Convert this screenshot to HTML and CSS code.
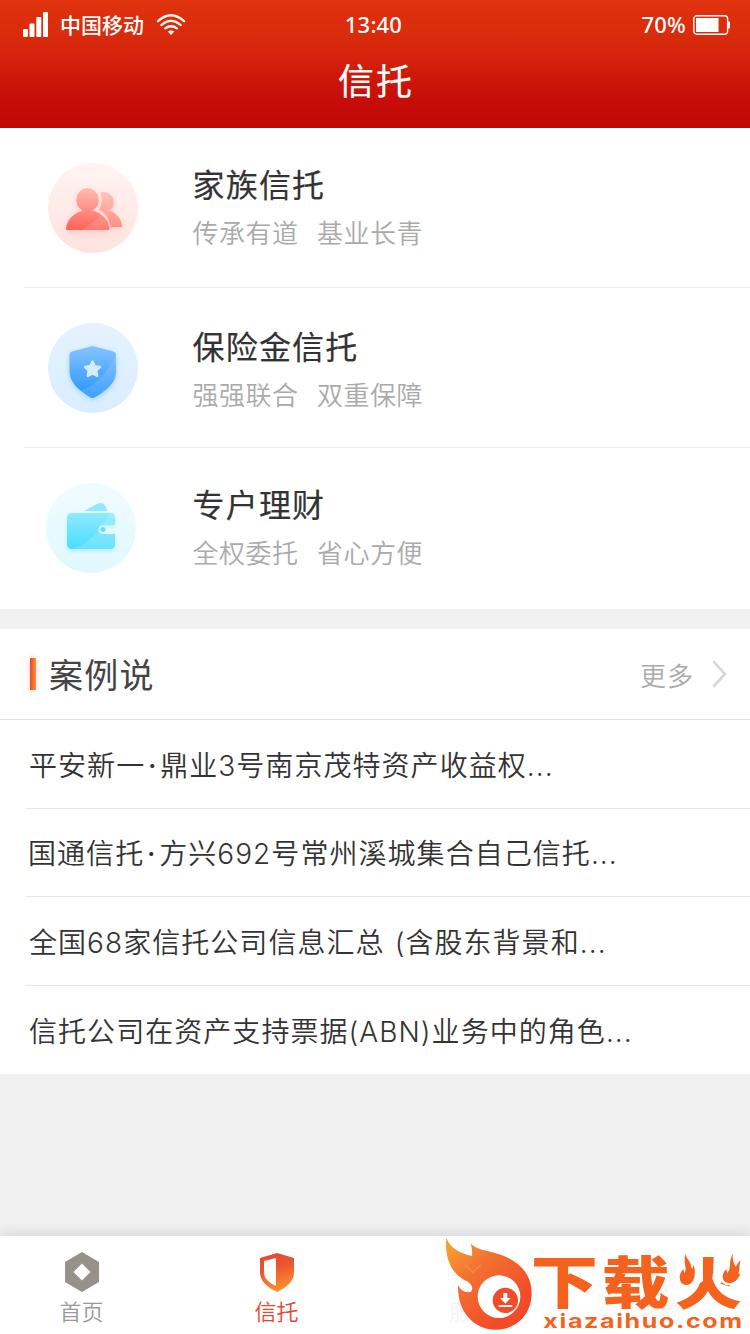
FILE: index.html
```html
<!DOCTYPE html>
<html lang="zh-CN">
<head>
<meta charset="utf-8">
<title>信托</title>
<link rel="stylesheet" href="styles.css">
</head>
<body>
<div class="app">
  <header class="header">
    <div class="status">
      <div class="status-left">
        <svg class="signal" viewBox="0 0 25 25" width="25" height="25" fill="#fff"><rect x="0" y="17" width="5" height="8" rx="1"/><rect x="6.5" y="11.5" width="5" height="13.5" rx="1"/><rect x="13.3" y="5" width="5" height="20" rx="1"/><rect x="20" y="0" width="5" height="25" rx="1"/></svg>
        <span class="carrier">中国移动</span>
        <svg class="wifi" viewBox="0 0 30 22" width="30" height="22" fill="none" stroke="#fff" stroke-width="2.3" stroke-linecap="round"><path d="M2 7.2Q15-4.6 28 7.2M5.4 11Q15 2.7 24.6 11M9.2 14.4Q15 10 20.8 14.4"/><path d="M15 21l-3.3-3.4q3.3-2.4 6.6 0z" fill="#fff" stroke="none"/></svg>
      </div>
      <div class="clock">13:40</div>
      <div class="status-right">
        <span>70%</span>
        <svg viewBox="0 0 37 20" width="37" height="20"><rect x=".8" y=".8" width="33.8" height="18.4" rx="3" fill="none" stroke="#fff" stroke-width="1.4"/><rect x="3" y="3" width="22.5" height="14" fill="#fff"/><path d="M35 6.5h1q1 0 1 1v5q0 1-1 1h-1z" fill="#fff"/></svg>
      </div>
    </div>
    <h1 class="title">信托</h1>
  </header>

  <section class="products">
    <div class="product">
      <svg class="product-icon" viewBox="0 0 90 90" width="90" height="90">
        <defs>
          <linearGradient id="redBg" x2="0" y2="1"><stop stop-color="#fff4f2"/><stop offset="1" stop-color="#ffe2de"/></linearGradient>
          <linearGradient id="redFg" x2="0" y2="1"><stop stop-color="#ffbcb5"/><stop offset="1" stop-color="#ff6357"/></linearGradient>
          <linearGradient id="redBack" x2="0" y2="1"><stop stop-color="#ffc4bd"/><stop offset="1" stop-color="#ff8e83"/></linearGradient>
          <filter id="soft" x="-30%" y="-30%" width="160%" height="170%"><feDropShadow dx="0" dy="3" stdDeviation="3" flood-color="#ff6357" flood-opacity=".2"/></filter>
          <clipPath id="peopleClip"><path d="M39 25a12 12 0 0 1 5 23c10 3 17 10 17 19H18c0-9 7-16 17-19a12 12 0 0 1 4-23z"/></clipPath>
        </defs>
        <circle cx="45" cy="45" r="45" fill="url(#redBg)"/>
        <g filter="url(#soft)">
          <path d="M52 29.5c7-2 14 3 14 9.500 0 4-2 7-5 8.500 7 2 13 8.500 13 16.500H62.500C61 56 58 50 51 47c3-5 4-12 1-17.500z" fill="url(#redBack)"/>
          <path d="M39.500 25a12 12 0 0 1 5 22.500c10 3 16.800 10 16.800 19.500H18c0-9.500 7-16.500 16.500-19.500a12 12 0 0 1 5-22.500z" fill="url(#redFg)"/>
        </g>
        <path d="M34 67Q52 56 65 37V70H34z" fill="#fff" opacity=".15" clip-path="url(#peopleClip)"/>
      </svg>
      <div class="product-text"><h2>家族信托</h2><p><span>传承有道</span><span>基业长青</span></p></div>
    </div>
    <div class="product second">
      <svg class="product-icon" viewBox="0 0 90 90" width="90" height="90">
        <defs>
          <linearGradient id="blueBg" x2="0" y2="1"><stop stop-color="#e5f2fe"/><stop offset="1" stop-color="#d9edff"/></linearGradient>
          <linearGradient id="blueFg" x2="0" y2="1"><stop stop-color="#85c3ff"/><stop offset="1" stop-color="#2494ff"/></linearGradient>
          <filter id="blueSoft" x="-30%" y="-30%" width="160%" height="170%"><feDropShadow dx="0" dy="2" stdDeviation="2.500" flood-color="#1685ed" flood-opacity=".25"/></filter>
        </defs>
        <circle cx="45" cy="45" r="45" fill="url(#blueBg)"/>
        <path d="M42.500 23.500q2-1 4 0l19 5q2.500 1 2.500 3v17c0 12-11 20-21.500 26q-2 1-4 0C32 68 21.500 60 21.500 48.500v-17q0-2 2.500-3z" fill="url(#blueFg)" filter="url(#blueSoft)"/>
        <path d="M68 32v16.500C68 60 57 68.500 46.500 74.500q-2 1-4 0l-10-7Q54 61 68 32z" fill="#fff" opacity=".12"/>
        <path d="M44.500 38.500l2.300 4.700 5.200.8-3.800 3.700 1 5.200-4.700-2.500-4.700 2.500 1-5.200-3.800-3.700 5.200-.8z" fill="#d9ecff" stroke="#d9ecff" stroke-width="2.400" stroke-linejoin="round"/>
      </svg>
      <div class="product-text"><h2>保险金信托</h2><p><span>强强联合</span><span>双重保障</span></p></div>
    </div>
    <div class="product third">
      <svg class="product-icon" viewBox="0 0 90 90" width="90" height="90">
        <defs>
          <linearGradient id="cyanBg" x2="0" y2="1"><stop stop-color="#f1fcff"/><stop offset="1" stop-color="#e0f8ff"/></linearGradient>
          <linearGradient id="cyanFg" x2="0" y2="1"><stop stop-color="#8feaff"/><stop offset="1" stop-color="#4bdcff"/></linearGradient>
          <filter id="cyanSoft" x="-30%" y="-30%" width="160%" height="170%"><feDropShadow dx="0" dy="2" stdDeviation="2" flood-color="#28cdf5" flood-opacity=".25"/></filter>
        </defs>
        <circle cx="45" cy="45" r="45" fill="url(#cyanBg)"/>
        <path d="M38 28l14-7.500q5-2 7.500 2.500l2 5z" fill="#91e9fd"/>
        <path d="M26 30h38q5 0 5 5v7H57a4.500 4.500 0 0 0 0 9h12v10q0 5-5 5H26q-5 0-5-5V35q0-5 5-5z" fill="url(#cyanFg)" filter="url(#cyanSoft)"/>
        <path d="M64 30q5 0 5 5v7H57a4.500 4.500 0 0 0 0 9h12v10q0 5-5 5H26Q52 57 64 30z" fill="#fff" opacity=".16"/>
        <circle cx="57" cy="46.500" r="2.500" fill="#65dff9"/>
      </svg>
      <div class="product-text"><h2>专户理财</h2><p><span>全权委托</span><span>省心方便</span></p></div>
    </div>
  </section>

  <section class="cases">
    <div class="cases-head">
      <i class="mark"></i>
      <h2>案例说</h2>
      <span class="more">更多</span>
      <svg class="chevron" viewBox="0 0 15 28" width="15" height="28" fill="none" stroke="#d8d8d8" stroke-width="2.600" stroke-linecap="round"><path d="M2 2l11 12L2 26"/></svg>
    </div>
    <ul class="list">
      <li><span>平安新一</span><b>·</b><span>鼎业3号南京茂特资产收益权...</span></li>
      <li class="pull"><span>国通信托</span><b>·</b><span>方兴692号常州溪城集合自己信托...</span></li>
      <li><span>全国68家信托公司信息汇总</span><span class="open">(含股东背景和...</span></li>
      <li><span>信托公司在资产支持票据(ABN)业务中的角色...</span></li>
    </ul>
  </section>

  <nav class="tabs">
    <div class="tab home">
      <svg viewBox="0 0 34 40" width="34" height="40"><path d="M17 0l17 10v20L17 40 0 30V10z" fill="#96918b"/><path d="M17 11.500l8.500 8.500-8.500 8.500L8.500 20z" fill="#fff"/></svg>
      <span>首页</span>
    </div>
    <div class="tab active">
      <svg viewBox="0 0 34 40" width="34" height="40"><defs><linearGradient id="tabFg" x1=".4" x2=".65" y2="1"><stop stop-color="#e6482f"/><stop offset=".35" stop-color="#eb552e"/><stop offset="1" stop-color="#ff962d"/></linearGradient></defs><path d="M17 1l17 5v15c0 8-8 15-17 19C8 36 0 29 0 21V6z" fill="url(#tabFg)"/><path d="M16 6v28C9 31 4 26 4 21V9z" fill="#fff"/></svg>
      <span>信托</span>
    </div>
    <div class="tab ghost"><svg viewBox="0 0 34 40" width="34" height="40"></svg><span>服务</span></div>
    <div class="tab ghost"><svg viewBox="0 0 34 40" width="34" height="40"><circle cx="17" cy="20" r="17" fill="#fafafa"/></svg><span>我的</span></div>
    <svg class="brand" viewBox="0 0 960 342" width="320" height="114">
      <defs>
        <linearGradient id="flame" x1=".05" y1="0" x2=".75" y2=".8"><stop stop-color="#f9a42f"/><stop offset=".4" stop-color="#f37332"/><stop offset="1" stop-color="#f34a28"/></linearGradient>
      </defs>
      <path d="M49 54C62 87 91 100 126 108Q128 91 122 70C139 90 169 91 202 101C264 119 305 160 305 220C305 284 259 329 198 329C132 329 81 276 84 194C91 211 107 220 123 215C133 202 121 187 103 180C61 158 43 105 49 54Z" fill="url(#flame)"/>
      <circle cx="207" cy="230" r="64" fill="#fff"/>
      <circle cx="226" cy="241" r="38" fill="#f14b29"/>
      <path d="M220 219h12v15h10l-16 17-16-17h10zM206 255h41v6h-41z" fill="#fff"/>
      <path d="M105 135l23 22 24-22" fill="none" stroke="#f7a15c" stroke-width="4" opacity=".55"/>
      <g class="brand-name"><text transform="translate(302 249) scale(1.060 .9)">下</text><text transform="translate(515 250) scale(1.070 .87)">载</text><text transform="translate(734 252) scale(1.060 .88)">火</text></g>
      <g fill="#fff"><path d="M738 95h81v88l-24 16h-57zM864 95h85v101h-60l-25-16z"/></g>
      <g fill="#f4621d"><path d="M766 101c2 14 18 25 17 38l4 8 3-13c10 21 4 61-21 61-24 0-25-33-9-48l3 13c10-18-4-29 3-59z"/><path d="M909 101c-4 20 4 30 8 39 7-7 6-15 14-18-5 15 1 27-7 38l7 2c-8 20-21 28-35 27-25-3-21-33-6-41l1 11c16-13 2-35 18-58z"/></g>
      <text class="brand-url" transform="translate(340 323) scale(1.250 1)" textLength="477" lengthAdjust="spacing">xiazaihuo.com</text>
    </svg>
  </nav>
</div>
</body>
</html>
```

FILE: styles.css
```css
* { box-sizing: border-box; }
body { margin: 0; font-family: "Noto Sans CJK SC", sans-serif; }
h1, h2, p, ul { margin: 0; padding: 0; font-weight: 400; }
svg { display: block; flex: none; }
.app { width: 750px; height: 1334px; display: flex; flex-direction: column; background: #f0f0f0; overflow: hidden; }

.header { height: 128px; background: linear-gradient(#e0330e, #d8280c 35%, #c70d08 78%, #c10606); color: #fff; }
.status { height: 49px; display: grid; grid-template-columns: 1fr auto 1fr; align-items: center; padding: 0 20px 0 23px; font: 500 22px/49px "Noto Sans", "Noto Sans CJK SC", sans-serif; letter-spacing: .2px; }
.status-left, .status-right { display: flex; align-items: center; }
.status-left { gap: 12px; }
.clock { margin-left: -6px; }
.carrier { font-size: 21px; letter-spacing: 0; font-family: "Noto Sans CJK SC", sans-serif; line-height: 47px; }
.status-right { justify-content: flex-end; gap: 7px; }
.title { font-size: 36px; line-height: 60px; letter-spacing: 2px; text-align: center; padding-left: 2px; -webkit-text-stroke: .2px #fff; }

.products { height: 481px; background: #fff; }
.product { height: 160px; margin-left: 24px; padding: 35px 0 0 24px; display: flex; gap: 54.500px; border-bottom: 1px solid #ececec; }
.product.third { padding-left: 22px; gap: 56.500px; border: 0; }
.product h2 { font-size: 32px; line-height: 40px; letter-spacing: 1.200px; color: #333; -webkit-text-stroke: .2px #333; }
.product p { display: flex; gap: 18.500px; margin-top: 9px; font-size: 26px; line-height: 40px; letter-spacing: .5px; color: #aaa; font-weight: 350; }
.second .product-text { margin-top: 2px; }

.cases { height: 445px; margin-top: 20px; background: #fff; }
.cases-head { height: 91px; display: flex; align-items: center; padding: 0 23px 0 30px; border-bottom: 1px solid #dfdfdf; }
.mark { width: 6px; height: 32px; background: linear-gradient(90deg, #ea4430, #ff962d); box-shadow: 0 0 6px rgba(234, 68, 48, .25); }
.cases-head h2 { margin: -2px 0 0 13px; font-size: 34px; letter-spacing: 1.2px; color: #444; }
.more { margin: 0 0 0 auto; font-size: 26px; letter-spacing: 1px; color: #aaa; font-weight: 350; }
.chevron { margin-left: 18px; }
.list { list-style: none; }
.list li { height: 88.6px; margin-left: 25px; padding-left: 4px; display: flex; align-items: center; border-bottom: 1px solid #e8e8e8; font-family: "Inter", "Noto Sans CJK SC", sans-serif; font-size: 28px; font-weight: 350; letter-spacing: 1.050px; color: #333; white-space: nowrap; }
.list li:last-child { border: 0; }
.list li.pull { padding-left: 3px; }
.list b { width: 15px; padding-top: 4px; text-align: center; font-weight: 500; }
.open { margin-left: 10px; }

.tabs { position: relative; height: 98px; margin-top: auto; display: grid; grid-template-columns: 179px 195px 195px 181px; background: #fff; box-shadow: 0 0 14px rgba(0, 0, 0, .15); }
.tab { display: flex; flex-direction: column; align-items: center; padding-top: 16px; font-size: 22px; line-height: 32px; font-weight: 350; color: #999; }
.tab span { margin-top: 2px; }
.home { padding-right: 16px; }
.active { color: #ea4430; }
.ghost { color: #f5f5f5; }
.brand { position: absolute; right: 0; bottom: 0; }
.brand-name { font: 900 190px "Noto Sans CJK SC", sans-serif; fill: #f4621d; }
.brand-url { font: 700 60px Inter, sans-serif; fill: #f4621d; }
```
